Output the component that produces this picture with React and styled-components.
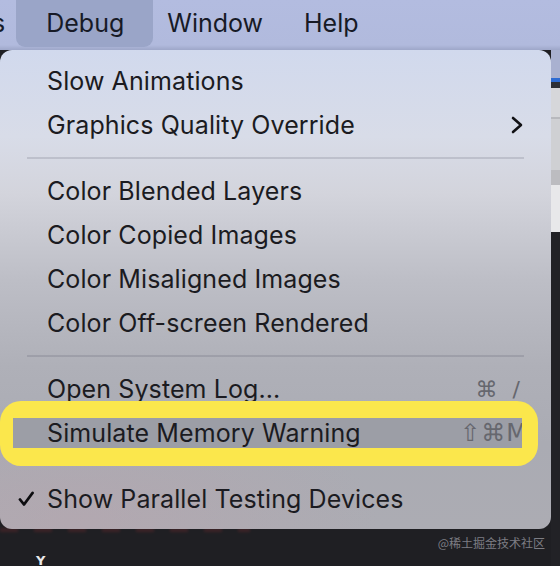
import styled, { createGlobalStyle } from "styled-components";

const GlobalStyle = createGlobalStyle`
  html, body {
    margin: 0;
    padding: 0;
    background: #1f1f23;
  }
  body {
    width: 560px;
    height: 566px;
    overflow: hidden;
    font-family: Inter, "Liberation Sans", sans-serif;
  }
`;

const Screen = styled.div`
  width: 560px;
  height: 566px;
  display: flex;
  flex-direction: column;
  background: #1f1f23;
  overflow: hidden;
`;

const MenuBar = styled.div`
  height: 50px;
  flex: none;
  display: flex;
  align-items: stretch;
  padding-bottom: 3px;
  box-sizing: border-box;
  background: linear-gradient(180deg, #b3bce0 0%, #b1badd 90%, #9ea7c9 100%);
  color: #171a26;
  font-size: 25px;
`;

const BarItem = styled.div`
  display: flex;
  align-items: center;
  padding: 0 ${(p) => p.$right}px 1px ${(p) => p.$left}px;
  margin-left: ${(p) => p.$gap || 0}px;
  background: ${(p) => (p.$active ? "#9aa5c8" : "transparent")};
  border-radius: 0 0 9px 9px;
`;

const Stage = styled.div`
  flex: 1;
  display: flex;
  align-items: flex-start;
  position: relative;
`;

const Menu = styled.div`
  width: 551px;
  padding: 9px 0 8px;
  box-sizing: border-box;
  border-radius: 12px;
  background:
    radial-gradient(ellipse 300px 120px at 80px 470px, rgba(190, 160, 170, 0.35), transparent),
    linear-gradient(
      180deg,
      #d1d9ed 0%,
      #d8dce8 18%,
      #d3d4dc 30%,
      #bdbec6 48%,
      #afb0b8 66%,
      #aaabb3 82%,
      #acacb3 100%
    );
  color: #1b1b21;
  font-size: 25px;
  position: relative;
  z-index: 1;
`;

const Item = styled.div`
  height: 44px;
  display: flex;
  align-items: center;
  padding: 0 29px 0 47px;
  position: relative;
  letter-spacing: 0.1px;
`;

const Label = styled.span`
  flex: 1;
  white-space: nowrap;
`;

const Shortcut = styled.span`
  font-family: "DejaVu Sans", sans-serif;
  font-size: ${(p) => p.$size || 22}px;
  color: #66676e;
  word-spacing: ${(p) => p.$spread || 0}px;
  letter-spacing: ${(p) => p.$track || 0}px;
  margin-right: ${(p) => p.$overhang || 0}px;
  white-space: nowrap;
`;

const Separator = styled.div`
  height: 22px;
  display: flex;
  align-items: center;
  padding: 0 27px;

  &::after {
    content: "";
    flex: 1;
    height: 2px;
    background: ${(p) => (p.$hidden ? "transparent" : "rgba(60, 64, 80, 0.16)")};
  }
`;

const Annotation = styled.div`
  margin: -10px 13px -11px 0;
  padding: 17px 16px 18px 13px;
  background: #fbe74c;
  border-radius: 21px;
  position: relative;
  z-index: 2;
`;

const Highlighted = styled.div`
  height: 30px;
  display: flex;
  align-items: center;
  padding-left: 34px;
  background: #9c9ea6;
  overflow: hidden;
  letter-spacing: 0.1px;
`;

const Check = styled.svg`
  position: absolute;
  left: 18px;
  top: 14px;
`;

const SideStrip = styled.div`
  flex: 1;
  align-self: stretch;
  display: flex;
  flex-direction: column;
`;

const Band = styled.div`
  height: ${(p) => p.$h}px;
  flex: ${(p) => (p.$h ? "none" : 1)};
  background: ${(p) => p.$c};
`;

const Footer = styled.div`
  position: absolute;
  left: 0;
  right: 0;
  bottom: 0;
  height: 38px;
`;

const RedText = styled.div`
  position: absolute;
  left: 0;
  top: 0;
  width: 250px;
  height: 4px;
  background: repeating-linear-gradient(90deg, #6a2a2e 0 18px, transparent 18px 34px);
  filter: blur(1.5px);
  opacity: 0.4;
`;

const Cursor = styled.div`
  position: absolute;
  left: 36px;
  bottom: 0;
  color: #e8e8ea;
  font-family: "DejaVu Sans", sans-serif;
  font-weight: bold;
  font-size: 13px;
  line-height: 11px;
`;

const Watermark = styled.div`
  position: absolute;
  right: 15px;
  top: 6px;
  font-family: "Noto Sans CJK SC", "Liberation Sans", sans-serif;
  font-size: 12px;
  color: #7d7d84;
`;

const Chevron = () => (
  <svg width="12" height="18" viewBox="0 0 12 18" style={{ marginRight: -1 }}>
    <polyline
      points="2,2 10,9 2,16"
      fill="none"
      stroke="#111114"
      strokeWidth="2.6"
      strokeLinecap="round"
      strokeLinejoin="round"
    />
  </svg>
);

export default function App() {
  return (
    <>
      <GlobalStyle />
      <Screen>
        <MenuBar>
          <BarItem $left={0} $right={0} style={{ marginLeft: -8 }}>
            s
          </BarItem>
          <BarItem $active $left={30} $right={29} $gap={11}>
            Debug
          </BarItem>
          <BarItem $left={14} $right={0}>
            Window
          </BarItem>
          <BarItem $left={41} $right={0}>
            Help
          </BarItem>
        </MenuBar>
        <Stage>
          <Menu>
            <Item>
              <Label>Slow Animations</Label>
            </Item>
            <Item>
              <Label>Graphics Quality Override</Label>
              <Chevron />
            </Item>
            <Separator />
            <Item>
              <Label>Color Blended Layers</Label>
            </Item>
            <Item>
              <Label>Color Copied Images</Label>
            </Item>
            <Item>
              <Label>Color Misaligned Images</Label>
            </Item>
            <Item>
              <Label>Color Off-screen Rendered</Label>
            </Item>
            <Separator />
            <Item>
              <Label>Open System Log...</Label>
              <Shortcut $spread={8} style={{ marginRight: 2 }}>
                ⌘ /
              </Shortcut>
            </Item>
            <Annotation>
              <Highlighted>
                <Label>Simulate Memory Warning</Label>
                <Shortcut $size={24} $track={1} $overhang={-6}>
                  ⇧⌘M
                </Shortcut>
              </Highlighted>
            </Annotation>
            <Separator $hidden />
            <Item>
              <Check width="16" height="16" viewBox="0 0 16 16">
                <polyline
                  points="2,8.5 6,13.5 14.5,2"
                  fill="none"
                  stroke="#0d0d10"
                  strokeWidth="2.8"
                  strokeLinecap="round"
                  strokeLinejoin="round"
                />
              </Check>
              <Label>Show Parallel Testing Devices</Label>
            </Item>
          </Menu>
          <SideStrip>
            <Band $h={28} $c="#a9b1d0" />
            <Band $h={4} $c="#2d6bd2" />
            <Band $h={6} $c="#2d2f36" />
            <Band $h={29} $c="#d6d7da" />
            <Band $h={2} $c="#b8b9bd" />
            <Band $h={51} $c="#cfd0d3" />
            <Band $h={15} $c="#bcbcc0" />
            <Band $h={47} $c="#e8e8ea" />
            <Band $c="#222226" />
          </SideStrip>
          <Footer>
            <RedText />
            <Cursor>Y</Cursor>
            <Watermark>@稀土掘金技术社区</Watermark>
          </Footer>
        </Stage>
      </Screen>
    </>
  );
}
